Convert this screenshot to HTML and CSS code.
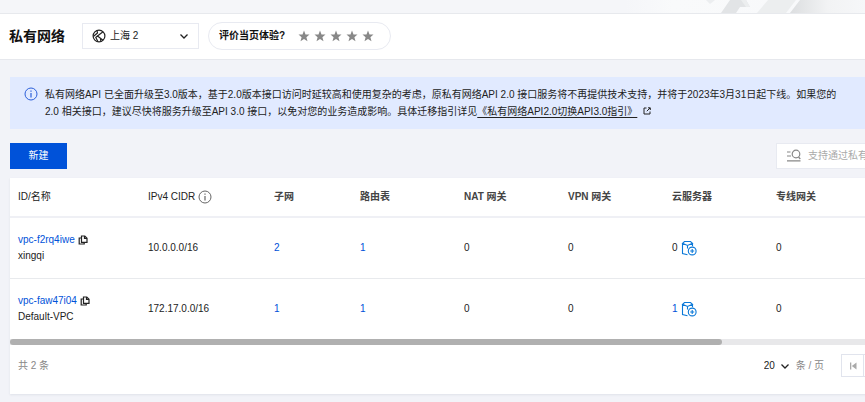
FILE: index.html
```
<!DOCTYPE html>
<html lang="zh-CN">
<head>
<meta charset="utf-8">
<title>私有网络</title>
<link rel="stylesheet" href="styles.css">
</head>
<body>
<svg class="sprite" aria-hidden="true">
  <symbol id="copy" viewBox="0 0 10 10"><path d="M3.500 1h3.300L9 3.200V7.300H3.500zM6.500 1v2.500H9M3.200 3H1.200v6h5V7.600" fill="none" stroke="currentColor" stroke-width="1.200"/></symbol>
  <symbol id="info" viewBox="0 0 14 14"><circle cx="7" cy="7" r="6" fill="none" stroke="currentColor"/><path d="M6.400 3.500h1.200v1.300H6.400zM6.400 6h1.200v4.500H6.400z" fill="currentColor"/></symbol>
  <symbol id="down" viewBox="0 0 10 10"><path d="M1.500 3.500 5 7l3.500-3.500" fill="none" stroke="currentColor" stroke-width="1.300"/></symbol>
  <symbol id="star" viewBox="0 0 12 12"><path d="M6 .6 7.500 4.400l4 .2-3.100 2.600 1.100 4L6 9l-3.500 2.200 1.100-4L.5 4.600l4-.2z" fill="currentColor"/></symbol>
  <symbol id="server" viewBox="0 0 16 16"><g fill="none" stroke="currentColor" stroke-width="1.100"><path d="M6.500 14.800 1.500 13.500V3.500M11.500 3.500v2.700M1.500 3.300 3.500 1.500h6l2 1.800-5 2.200zM6.500 5.500v3"/><circle cx="11.200" cy="11" r="3.900"/><path d="M11.200 9v4M9.200 11h4"/></g></symbol>
</svg>
<div class="topbar">
  <svg class="topbar-art" viewBox="0 0 240 13" aria-hidden="true">
    <defs>
      <linearGradient id="fade"><stop offset="0" stop-color="#dcdee0"/><stop offset=".5" stop-color="#f2f3f4"/><stop offset="1" stop-color="#f6f7f9"/></linearGradient>
      <linearGradient id="base"><stop offset="0" stop-color="#f5f6f9"/><stop offset=".2" stop-color="#f9fafb"/><stop offset="1" stop-color="#f7f8fa"/></linearGradient>
    </defs>
    <path d="M0 0h240v13H0z" fill="url(#base)"/>
    <path d="M81 0h9l-5 4z" fill="#eceef0"/>
    <path d="M105 0h16l4 7h-10l-4 6H96z" fill="#e2e4e6"/>
    <path d="M116 0h5l4 7h-4z" fill="#eceeef"/>
    <path d="M143 0h28l-10 13h-29z" fill="#eceeef"/>
    <path d="M175 0h65v13h-75z" fill="url(#fade)"/>
  </svg>
</div>
<header class="header">
  <h1>私有网络</h1>
  <label class="region" aria-label="地域">
    <svg class="region-icon" viewBox="0 0 14 14"><g fill="none" stroke="currentColor" stroke-width="1.200"><circle cx="7" cy="7" r="5.900"/><path d="M5 1.500 5.500 4 1.300 7.500M11 2.800 5.500 7l5.500 4.300M5.500 7 3.800 8.500 6 12.800M8.500 9.300 8.800 12.500"/></g></svg>
    <select><option>上海 2</option></select>
    <svg class="icon-10"><use href="#down"/></svg>
  </label>
  <div class="rating">
    <b>评价当页体验?</b>
    <div class="stars">
      <button aria-label="1"><svg><use href="#star"/></svg></button>
      <button aria-label="2"><svg><use href="#star"/></svg></button>
      <button aria-label="3"><svg><use href="#star"/></svg></button>
      <button aria-label="4"><svg><use href="#star"/></svg></button>
      <button aria-label="5"><svg><use href="#star"/></svg></button>
    </div>
  </div>
</header>
<main>
  <div class="wide">
  <div class="notice">
    <svg class="icon-14"><use href="#info"/></svg>
    <p>私有网络API 已全面升级至3.0版本，基于2.0版本接口访问时延较高和使用复杂的考虑，原私有网络API 2.0 接口服务将不再提供技术支持，并将于2023年3月31日起下线。如果您的<br>2.0 相关接口，建议尽快将服务升级至API 3.0 接口，以免对您的业务造成影响。具体迁移指引详见<a href="#">《私有网络API2.0切换API3.0指引》</a>
    <svg class="external" viewBox="0 0 8 8"><path d="M3.500 1H1v6h6V4.500M5 .8h2.300V3M7 1 3.800 4.200" fill="none" stroke="currentColor"/></svg></p>
  </div>
  <div class="toolbar">
    <button class="primary">新建</button>
    <label class="search" aria-label="搜索">
      <svg viewBox="0 0 14 14"><g fill="none" stroke="currentColor" stroke-width="1.200"><circle cx="9" cy="5" r="3.800"/><path d="m11.500 8 1.800 2M0 3h3.500M0 7h4M0 11.800h13.500"/></g></svg>
      <input type="search" placeholder="支持通过私有网络ID">
    </label>
  </div>
  <section class="card">
    <table>
      <colgroup><col class="c-id"><col class="c-cidr"><col class="c-subnet"><col span="4" class="c-gateway"><col></colgroup>
      <thead><tr><th class="plain">ID/名称</th><th class="plain"><span class="cell">IPv4 CIDR <svg class="icon-14"><use href="#info"/></svg></span></th><th>子网</th><th>路由表</th><th>NAT 网关</th><th>VPN 网关</th><th>云服务器</th><th>专线网关</th></tr></thead>
      <tbody>
        <tr><td><span class="cell"><a href="#">vpc-f2rq4iwe</a><button aria-label="复制"><svg class="icon-10"><use href="#copy"/></svg></button></span>xingqi</td><td>10.0.0.0/16</td><td><a href="#">2</a></td><td><a href="#">1</a></td><td>0</td><td>0</td><td><span class="cell">0<button class="add" aria-label="添加"><svg><use href="#server"/></svg></button></span></td><td>0</td></tr>
        <tr><td><span class="cell"><a href="#">vpc-faw47i04</a><button aria-label="复制"><svg class="icon-10"><use href="#copy"/></svg></button></span>Default-VPC</td><td>172.17.0.0/16</td><td><a href="#">1</a></td><td><a href="#">1</a></td><td>0</td><td>0</td><td><span class="cell"><a href="#">1</a><button class="add" aria-label="添加"><svg><use href="#server"/></svg></button></span></td><td>0</td></tr>
      </tbody>
    </table>
    <div class="scrollbar"><div class="thumb"></div></div>
    <footer>
      <span>共 2 条</span>
      <div class="pager">
        <label class="size"><select aria-label="每页条数"><option>20</option></select><svg class="icon-10"><use href="#down"/></svg></label>
        <span>条 / 页</span>
        <div class="pages">
          <button aria-label="首页"><svg class="icon-10" viewBox="0 0 10 10"><path d="M2 1.500h1.300v7H2zM8.500 1.500v7L3.800 5z" fill="currentColor"/></svg></button>
          <button aria-label="上一页"></button>
        </div>
      </div>
    </footer>
  </section>
  </div>
</main>
</body>
</html>
```

FILE: styles.css
```
* { box-sizing: border-box; }
body {
  margin: 0;
  background: #f2f3f8;
  color: #222;
  font: 10px/16px "Liberation Sans", "Noto Sans CJK SC", sans-serif;
}
svg { display: block; flex: none; }
.sprite { position: absolute; width: 0; height: 0; }
.icon-10 { width: 10px; height: 10px; }
.icon-14 { width: 14px; height: 14px; }
a { color: #0052d9; text-decoration: none; }
button { padding: 0; border: 0; background: none; color: inherit; font: inherit; }
select, input { border: 0; background: none; color: inherit; font: inherit; appearance: none; outline: 0; }

.topbar { display: flex; justify-content: flex-end; height: 14px; background: #f5f6f9; border-bottom: 1px solid #e7e9ed; }
.topbar-art { width: 240px; height: 13px; }

.header { display: flex; align-items: center; height: 46px; padding: 0 9px 2px; background: #fff; border-bottom: 1px solid #e6e8ed; }
h1 { margin: 0 17px 0 0; color: #111; font-size: 14px; line-height: 20px; }
.region { display: flex; align-items: center; width: 117px; height: 26px; padding: 0 9px; border: 1px solid #e8eaf1; }
.region-icon { width: 14px; height: 14px; margin-right: 4px; }
.region select { flex: 1; min-width: 0; padding: 0; }
.rating { display: flex; align-items: center; gap: 13px; height: 28px; margin-left: 9px; padding: 0 16px 0 10px; border: 1px solid #e8eaf1; border-radius: 14px; }
.rating b { color: #111; }
.stars { display: flex; gap: 4px; color: #888; }
.stars svg { width: 12px; height: 12px; }

main { overflow: hidden; padding: 17px 0 8px 10px; }
.wide { width: calc(100% + 120px); }
.notice { display: flex; gap: 7px; padding: 9px 14px; background: #e1eaff; }
.notice p { margin: 0; line-height: 17px; white-space: nowrap; }
.notice > svg { margin-top: 1px; color: #2b5fda; }
.notice a { color: inherit; text-decoration: underline; text-underline-offset: 2px; }
.external { display: inline-block; width: 8px; height: 8px; margin-left: 3px; }

.toolbar { display: flex; justify-content: space-between; margin: 14px 0 9px; }
.primary { width: 57px; height: 26px; background: #0052d9; color: #fff; }
.search { display: flex; align-items: center; gap: 7px; width: 209px; height: 26px; padding: 0 10px; background: #fff; border: 1px solid #e8eaf1; color: #888; }
.search svg { width: 14px; height: 14px; }
.search input { flex: 1; min-width: 0; padding: 0; }
.search input::placeholder { color: #aaa; }

.card { background: #fff; box-shadow: 0 1px 2px #dfe2e9; }
table { width: 100%; border-collapse: collapse; table-layout: fixed; }
.c-id { width: 130px; }
.c-cidr { width: 126px; }
.c-subnet { width: 86px; }
.c-gateway { width: 104px; }
th, td { padding: 0 8px; text-align: left; }
th { height: 39px; border-bottom: 2px solid #eff0f5; color: #444; }
th svg { color: #666; }
.plain { color: #222; font-weight: 400; }
td { height: 61px; border-bottom: 1px solid #e8eaed; }
tbody tr:last-child td { border-bottom: 0; }
.cell { display: flex; align-items: center; gap: 3px; }
.add { color: #0a78d8; }
.add svg { width: 16px; height: 16px; }
.scrollbar { height: 6px; background: #e8e8ea; }
.thumb { width: 73%; height: 6px; border-radius: 3px; background: #b0b0b0; }

footer { display: flex; align-items: center; justify-content: space-between; height: 49px; padding: 0 8px 8px; color: #888; }
.pager { display: flex; align-items: center; gap: 6px; }
.size { display: flex; align-items: center; gap: 4px; color: #222; }
.size select { padding: 0; }
.pages { display: flex; width: 136px; margin-left: 11px; }
.pages button { display: grid; place-items: center; width: 23px; height: 23px; margin-right: -1px; border: 1px solid #e1e4ed; color: #aaa; }
```
